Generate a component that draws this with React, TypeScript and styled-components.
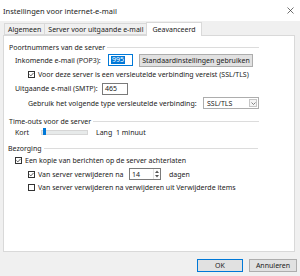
import styled, { createGlobalStyle } from "styled-components";

const Global = createGlobalStyle`
    html, body { margin: 0; padding: 0; background: #f0f0f0; }
    body { font-family: "Noto Sans", "Open Sans", sans-serif; color: #1b1b1b; }
`;

// Whole dialog
const Window = styled.div`
    width: 300px; height: 276px;
    background: #f0f0f0;
    display: flex; flex-direction: column;
    font-size: 7px;
    overflow: hidden;
`;
const TitleBar = styled.div`
    height: 21px; background: #fff;
    display: flex; align-items: center; justify-content: space-between;
    padding: 0 6px 0 3px;
    font-size: 7.5px; color: #222;
`;
const Close = styled.svg`
    width: 7px; height: 7px;
`;
const Body = styled.div`
    flex: 1;
    padding: 2px 5px 0 3px;
    display: flex; flex-direction: column;
`;
// Tabs
const TabRow = styled.div`
    display: flex; align-items: flex-end;
    height: 12px; padding-left: 2px;
`;
const Tab = styled.div<{ $active?: boolean }>`
    height: ${(p) => (p.$active ? "13px" : "10px")};
    padding: 0 ${(p) => (p.$active ? "5px" : "3px")};
    margin-bottom: ${(p) => (p.$active ? "-1px" : "0")};
    display: flex; align-items: center;
    background: ${(p) => (p.$active ? "#fff" : "#f0f0f0")};
    border: 1px solid #d9d9d9;
    border-bottom: ${(p) => (p.$active ? "none" : "1px solid #d9d9d9")};
    margin-left: -1px;
    position: relative; z-index: ${(p) => (p.$active ? 2 : 1)};
`;
const Panel = styled.div`
    height: 217px;
    background: #fff;
    border: 1px solid #d9d9d9;
    padding: 5px 0 0 0;
    box-sizing: border-box;
`;
const GroupHead = styled.div<{ $x?: number }>`
    height: 12px; width: 250px;
    margin-left: ${(p) => p.$x ?? 5}px;
    display: flex; align-items: center; gap: 2px;
    &::after { content: ""; flex: 1; height: 1px; background: #dcdcdc; }
`;
const Row = styled.div<{ $h: number; $x: number }>`
    height: ${(p) => p.$h}px;
    padding-left: ${(p) => p.$x}px;
    display: flex; align-items: center;
    white-space: nowrap;
`;
const Label = styled.span<{ $w?: number }>`
    width: ${(p) => (p.$w ? `${p.$w}px` : "auto")};
    flex-shrink: 0;
`;
const Field = styled.div<{ $w: number; $focus?: boolean }>`
    width: ${(p) => p.$w}px; height: 12px;
    box-sizing: border-box;
    border: 1px solid ${(p) => (p.$focus ? "#0078d7" : "#7a7a7a")};
    background: #fff;
    display: flex; align-items: center;
    padding-left: 2px;
`;
const Selected = styled.span`
    background: #0078d7; color: #fff; padding: 0 1px; line-height: 8px;
`;
const Button = styled.div<{ $w: number; $default?: boolean }>`
    width: ${(p) => p.$w}px; height: 13px;
    box-sizing: border-box;
    border: 1px solid ${(p) => (p.$default ? "#0078d7" : "#adadad")};
    background: #e1e1e1;
    display: flex; align-items: center; justify-content: center;
`;
const Box = styled.span`
    width: 7px; height: 7px;
    box-sizing: border-box;
    border: 1px solid #333;
    background: #fff;
    margin-right: 3px;
    display: inline-flex; align-items: center; justify-content: center;
    flex-shrink: 0;
`;
const Select = styled.div`
    width: 56px; height: 12px;
    margin-left: 7px;
    box-sizing: border-box;
    border: 1px solid #adadad;
    background: #fff;
    display: flex; align-items: center; justify-content: space-between;
    padding: 0 1px 0 3px;
`;
const DropBtn = styled.span`
    width: 8px; height: 8px; box-sizing: border-box;
    border: 1px solid #c6c6c6; background: #f4f4f4;
    display: flex; align-items: center; justify-content: center;
`;
const Track = styled.div`
    width: 45px; height: 3px;
    margin: 0 8px 0 12px;
    background: #e7eaea; border: 1px solid #d6d6d6;
    position: relative;
`;
const Thumb = styled.span`
    position: absolute; left: 1px; top: -3px;
    width: 3px; height: 7px; background: #0078d7;
`;
const Spin = styled.span`
    margin-left: auto; width: 6px; height: 10px;
    display: flex; flex-direction: column; justify-content: space-around; align-items: center;
    border-left: 1px solid #e3e3e3;
`;
const Footer = styled.div`
    display: flex; justify-content: flex-end; gap: 6px;
    padding: 7px 0 0;
    margin-right: -2px;
`;

const Check = ({ on }: { on?: boolean }) => (
    <Box>
        {on && (
            <svg width="6" height="5" viewBox="0 0 6 5">
                <path d="M0.5 2.5 L2.2 4.2 L5.5 0.6" fill="none" stroke="#222" strokeWidth="0.9" />
            </svg>
        )}
    </Box>
);

const Arrow = ({ up }: { up?: boolean }) => (
    <svg width="4" height="3" viewBox="0 0 4 3">
        <path d={up ? "M0 3 L2 0.5 L4 3" : "M0 0 L2 2.5 L4 0"} fill="#555" />
    </svg>
);

export default function App() {
    return (
        <Window>
            <Global />
            <TitleBar>
                <span>Instellingen voor internet-e-mail</span>
                <Close viewBox="0 0 7 7">
                    <path d="M0.5 0.5 L6.5 6.5 M6.5 0.5 L0.5 6.5" stroke="#333" strokeWidth="0.7" />
                </Close>
            </TitleBar>
            <Body>
                <TabRow>
                    <Tab>Algemeen</Tab>
                    <Tab>Server voor uitgaande e-mail</Tab>
                    <Tab $active>Geavanceerd</Tab>
                </TabRow>
                <Panel>
                    <GroupHead>Poortnummers van de server</GroupHead>
                    <Row $h={14} $x={11}>
                        <Label $w={93}>Inkomende e-mail (POP3):</Label>
                        <Field $w={25} $focus><Selected>995</Selected></Field>
                        <Button $w={114} style={{ marginLeft: 6 }}>Standaardinstellingen gebruiken</Button>
                    </Row>
                    <Row $h={14} $x={24}>
                        <Check on />
                        Voor deze server is een versleutelde verbinding vereist (SSL/TLS)
                    </Row>
                    <Row $h={15} $x={11}>
                        <Label $w={87}>Uitgaande e-mail (SMTP):</Label>
                        <Field $w={26}>465</Field>
                    </Row>
                    <Row $h={14} $x={24}>
                        <Label $w={168}>Gebruik het volgende type versleutelde verbinding:</Label>
                        <Select>
                            SSL/TLS
                            <DropBtn>
                                <svg width="5" height="3" viewBox="0 0 5 3">
                                    <path d="M0.5 0.5 L2.5 2.5 L4.5 0.5" fill="none" stroke="#666" strokeWidth="0.8" />
                                </svg>
                            </DropBtn>
                        </Select>
                    </Row>
                    <GroupHead style={{ marginTop: 5 }}>Time-outs voor de server</GroupHead>
                    <Row $h={11} $x={11}>
                        Kort
                        <Track><Thumb /></Track>
                        <Label $w={20}>Lang</Label>
                        1 minuut
                    </Row>
                    <GroupHead $x={4} style={{ marginTop: 4 }}>Bezorging</GroupHead>
                    <Row $h={13} $x={11}>
                        <Check on />
                        Een kopie van berichten op de server achterlaten
                    </Row>
                    <Row $h={14} $x={24}>
                        <Check on />
                        <Label $w={91}>Van server verwijderen na</Label>
                        <Field $w={32}>14<Spin><Arrow up /><Arrow /></Spin></Field>
                        <Label style={{ marginLeft: 8 }}>dagen</Label>
                    </Row>
                    <Row $h={13} $x={24}>
                        <Check />
                        Van server verwijderen na verwijderen uit Verwijderde items
                    </Row>
                </Panel>
                <Footer>
                    <Button $w={46} $default>OK</Button>
                    <Button $w={48}>Annuleren</Button>
                </Footer>
            </Body>
        </Window>
    );
}
